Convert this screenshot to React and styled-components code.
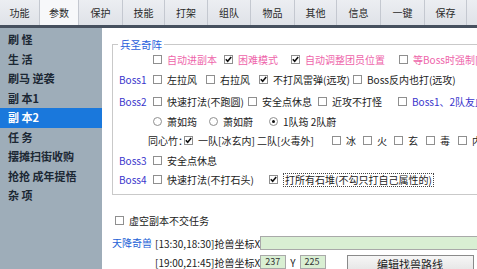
import React from 'react';
import styled, { createGlobalStyle } from 'styled-components';

const GlobalStyle = createGlobalStyle`
  html, body { margin: 0; padding: 0; background: #fff; }
  body { font-family: "Noto Sans CJK SC", "Noto Sans", sans-serif; }
`;

const Window = styled.div`
  width: 477px;
  height: 269px;
  overflow: hidden;
  display: flex;
  flex-direction: column;
  background: #fff;
`;

const TabBar = styled.div`
  display: flex;
  height: 25px;
  flex-shrink: 0;
  background: linear-gradient(#eceef2, #dfe2e8);
`;

const Tab = styled.div`
  width: ${p => p.$w}px;
  flex-shrink: 0;
  box-sizing: border-box;
  display: flex;
  align-items: center;
  justify-content: center;
  font-size: 10px;
  color: #2a2a2a;
  border-right: 1px solid #c4c8d0;
  background: ${p => (p.$active ? '#f7f8fa' : 'transparent')};
`;

const TabRule = styled.div`
  height: 3px;
  flex-shrink: 0;
  background: #46505e;
`;

const Body = styled.div`
  flex: 1;
  display: flex;
  min-height: 0;
`;

const Sidebar = styled.div`
  width: 102px;
  flex-shrink: 0;
  background: #9eadb9;
  padding-top: 2px;
`;

const SideItem = styled.div`
  height: 19.5px;
  line-height: 19.5px;
  padding-left: 8px;
  font-size: 11px;
  font-weight: bold;
  white-space: nowrap;
  color: ${p => (p.$active ? '#fff' : '#1b2733')};
  background: ${p => (p.$active ? '#1a78dc' : 'transparent')};
`;

const Content = styled.div`
  flex: 1;
  min-width: 0;
  padding-left: 10px;
  display: flex;
  flex-direction: column;
  font-size: 10px;
  color: #222;
`;

const Group = styled.div`
  position: relative;
  margin-top: 16px;
  width: 400px;
  flex-shrink: 0;
  box-sizing: border-box;
  border: 1px solid #c9c9c9;
  padding: 4px 0 5px 6px;
`;

const Legend = styled.div`
  position: absolute;
  top: -8px;
  left: 5px;
  padding: 0 2px;
  background: #fff;
  color: #2a5fdc;
  font-size: 10.5px;
  line-height: 15px;
`;

const Row = styled.div`
  display: flex;
  align-items: center;
  height: ${p => p.$h}px;
  white-space: nowrap;
`;

const BossLabel = styled.div`
  width: 34px;
  flex-shrink: 0;
  color: #3a36cc;
`;

const SubLabel = styled.div`
  margin-left: 29px;
  width: 36px;
  flex-shrink: 0;
`;

const tones = { pink: '#ee64aa', blue: '#3a36cc', plain: '#222' };

const Item = styled.label`
  display: inline-flex;
  align-items: center;
  flex-shrink: 0;
  width: ${p => (p.$w ? `${p.$w}px` : 'auto')};
  color: ${p => tones[p.$tone || 'plain']};
`;

const Box = styled.span`
  width: 9px;
  height: 9px;
  box-sizing: border-box;
  border: 1px solid #8f8f8f;
  background: #fff;
  margin-right: 5px;
  flex-shrink: 0;
  display: flex;
  align-items: center;
  justify-content: center;
`;

const Dot = styled(Box)`
  border-radius: 50%;
  &::after {
    content: '';
    display: ${p => (p.$on ? 'block' : 'none')};
    width: 3px;
    height: 3px;
    border-radius: 50%;
    background: #111;
  }
`;

const Focus = styled.span`
  border: 1px dotted #444;
  padding: 0 1px;
  line-height: 12px;
`;

const Tick = () => (
  <svg width="7" height="7" viewBox="0 0 7 7">
    <polyline points="0.8,3.2 2.7,5.3 6.2,1" fill="none" stroke="#111" strokeWidth="1.6" />
  </svg>
);

const Check = ({ on, w, tone, children }) => (
  <Item $w={w} $tone={tone}>
    <Box>{on && <Tick />}</Box>
    {children}
  </Item>
);

const Radio = ({ on, w, children }) => (
  <Item $w={w}>
    <Dot $on={on} />
    {children}
  </Item>
);

const Spacer = styled.div`
  width: 34px;
  flex-shrink: 0;
`;

const SoloRow = styled.div`
  display: flex;
  align-items: center;
  height: 16px;
  margin-top: 17px;
  padding-left: 3px;
`;

const Beast = styled.div`
  display: grid;
  grid-template-columns: 43px auto;
  row-gap: 5px;
  margin-top: 8px;
`;

const BeastTitle = styled.div`
  color: #1d5fd6;
  line-height: 14px;
`;

const Slot = styled.div`
  display: flex;
  align-items: center;
  height: 14px;
  white-space: nowrap;
`;

const Field = styled.div`
  width: ${p => p.$w}px;
  height: 14px;
  flex-shrink: 0;
  box-sizing: border-box;
  border: 1px solid #a9a9a9;
  background: #d9efd3;
  font-size: 9px;
  line-height: 12px;
  padding-left: 4px;
  color: #333;
`;

const Axis = styled.span`
  margin: 0 4px;
`;

const Button = styled.div`
  margin-left: 21px;
  width: 127px;
  height: 20px;
  flex-shrink: 0;
  box-sizing: border-box;
  border: 1px solid #8a8a8a;
  background: linear-gradient(#f6f6f6, #e2e2e2);
  text-align: center;
  font-size: 11px;
  line-height: 17px;
  margin-top: 6px;
`;

const tabs = [
  ['功能', 40], ['参数', 39, true], ['保护', 44], ['技能', 42], ['打架', 43], ['组队', 43],
  ['物品', 44], ['其他', 42], ['信息', 44], ['一键', 44], ['保存', 42], ['', 20],
];

const sideItems = ['刷 怪', '生 活', '刷马 逆袭', '副 本1', '副 本2', '任 务', '摆摊扫街收购', '抢抢 成年提悟', '杂 项'];

export default function App() {
  return (
    <Window>
      <GlobalStyle />
      <TabBar>
        {tabs.map(([t, w, a], i) => (
          <Tab key={i} $w={w} $active={a}>{t}</Tab>
        ))}
      </TabBar>
      <TabRule />
      <Body>
        <Sidebar>
          {sideItems.map((s, i) => (
            <SideItem key={s} $active={i === 4}>{s}</SideItem>
          ))}
        </Sidebar>
        <Content>
          <Group>
            <Legend>兵圣奇阵</Legend>
            <Row $h={20}>
              <Spacer />
              <Check w={71} tone="pink">自动进副本</Check>
              <Check w={67} tone="pink" on>困难模式</Check>
              <Check w={108} tone="pink" on>自动调整团员位置</Check>
              <Check tone="pink">等Boss时强制[</Check>
            </Row>
            <Row $h={21}>
              <BossLabel>Boss1</BossLabel>
              <Check w={53}>左拉风</Check>
              <Check w={53}>右拉风</Check>
              <Check w={94} on>不打风雷弹(远攻)</Check>
              <Check>Boss反内也打(远攻)</Check>
            </Row>
            <Row $h={22}>
              <BossLabel>Boss2</BossLabel>
              <Check w={95}>快速打法(不跑圆)</Check>
              <Check w={70}>安全点休息</Check>
              <Check w={80}>近攻不打怪</Check>
              <Check tone="blue">Boss1、2队友血</Check>
            </Row>
            <Row $h={19}>
              <Spacer />
              <Radio w={56}>萧如筠</Radio>
              <Radio w={60}>萧如蔚</Radio>
              <Radio on>1队筠 2队蔚</Radio>
            </Row>
            <Row $h={19}>
              <SubLabel>同心竹：</SubLabel>
              <Check w={148} on>一队[冰玄内] 二队[火毒外]</Check>
              <Check w={31}>冰</Check>
              <Check w={31}>火</Check>
              <Check w={32}>玄</Check>
              <Check w={32}>毒</Check>
              <Check>内</Check>
            </Row>
            <Row $h={20}>
              <BossLabel>Boss3</BossLabel>
              <Check>安全点休息</Check>
            </Row>
            <Row $h={19}>
              <BossLabel>Boss4</BossLabel>
              <Check w={116}>快速打法(不打石头)</Check>
              <Check on><Focus>打所有石堆(不勾只打自己属性的)</Focus></Check>
            </Row>
          </Group>
          <SoloRow>
            <Check>虚空副本不交任务</Check>
          </SoloRow>
          <Beast>
            <BeastTitle>天降奇兽</BeastTitle>
            <Slot>
              [13:30,18:30]抢兽坐标X
              <Field $w={220} />
            </Slot>
            <div />
            <Slot>
              [19:00,21:45]抢兽坐标X
              <Field $w={26}>237</Field>
              <Axis>Y</Axis>
              <Field $w={26}>225</Field>
              <Button>编辑找兽路线</Button>
            </Slot>
          </Beast>
        </Content>
      </Body>
    </Window>
  );
}
